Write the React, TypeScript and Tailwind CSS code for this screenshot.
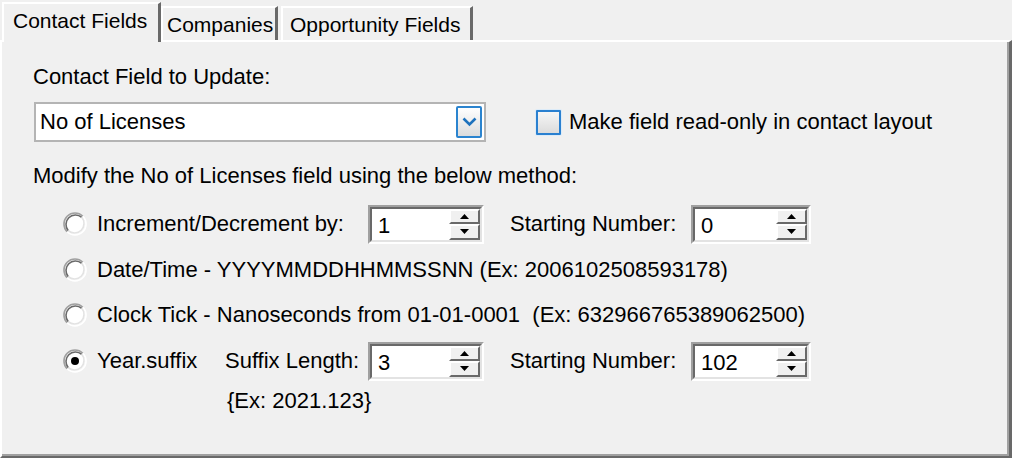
import React from 'react';

const Radio: React.FC<{ checked?: boolean }> = ({ checked }) => (
  <svg width="24" height="24" viewBox="0 0 24 24" className="shrink-0">
    <circle cx="12" cy="12" r="10" fill="#ffffff" />
    <path d="M4.2 19.8 A11 11 0 0 1 19.8 4.2" fill="none" stroke="#a0a0a0" strokeWidth="1.6" />
    <path d="M5.3 18.7 A9.5 9.5 0 0 1 18.7 5.3" fill="none" stroke="#696969" strokeWidth="1.6" />
    <path d="M19.8 4.2 A11 11 0 0 1 4.2 19.8" fill="none" stroke="#ffffff" strokeWidth="1.6" />
    <path d="M18.7 5.3 A9.5 9.5 0 0 1 5.3 18.7" fill="none" stroke="#e3e3e3" strokeWidth="1.6" />
    {checked && <circle cx="12" cy="12" r="4" fill="#000000" />}
  </svg>
);

const Arrow: React.FC<{ up?: boolean }> = ({ up }) => (
  <svg width="9" height="5" viewBox="0 0 9 5">
    {up ? <polygon points="0,5 9,5 4.5,0" fill="#000" /> : <polygon points="0,0 9,0 4.5,5" fill="#000" />}
  </svg>
);

const SpinBox: React.FC<{ value: string; width: string }> = ({ value, width }) => (
  <div className={`${width} h-[39px] shrink-0 border-t-2 border-l-2 border-[#a0a0a0] border-b-2 border-r-2 border-b-white border-r-white`}>
    <div className="h-full flex border-t-2 border-l-2 border-[#696969] border-b-2 border-r-2 border-b-[#e3e3e3] border-r-[#e3e3e3] bg-white">
      <div className="flex-1 flex items-center pl-[6px] pt-[3px]">{value}</div>
      <div className="w-[31px] flex flex-col">
        <div className="flex-1 flex items-center justify-center bg-[#f0f0f0] border-t-2 border-l-2 border-white border-b-2 border-r-2 border-b-[#696969] border-r-[#696969]">
          <Arrow up />
        </div>
        <div className="flex-1 flex items-center justify-center bg-[#f0f0f0] border-t-2 border-l-2 border-white border-b-2 border-r-2 border-b-[#696969] border-r-[#696969]">
          <Arrow />
        </div>
      </div>
    </div>
  </div>
);

export default function App() {
  return (
    <div className="w-[1012px] h-[458px] bg-[#f0f0f0] flex flex-col overflow-hidden text-black font-['Liberation_Sans',Arial,sans-serif]">
      {/* Tabs */}
      <div className="h-[42px] shrink-0 flex items-end relative z-10 text-[21px] leading-none">
        <div className="ml-[2px] h-[40px] w-[159px] bg-[#f0f0f0] border-t-2 border-l-2 border-white border-r-[3px] border-r-[#696969] flex pt-[6px] pl-[9px]">
          Contact Fields
        </div>
        <div className="mb-[2px] h-[34px] w-[117px] border-t-2 border-l-2 border-white border-r-[3px] border-r-[#696969] flex items-center pl-[4px]">
          Companies
        </div>
        <div className="ml-[3px] mb-[2px] h-[34px] w-[192px] border-t-2 border-l-2 border-white border-r-[3px] border-r-[#696969] flex items-center pl-[7px]">
          Opportunity Fields
        </div>
      </div>

      {/* Panel */}
      <div className="-mt-[2px] flex-1 border-t-2 border-l-2 border-white border-r-[3px] border-b-2 border-r-[#696969] border-b-[#696969] shadow-[inset_-2px_-2px_0_#a0a0a0] text-[22px] leading-[24px] pl-[31px]">
        <div className="mt-[23px]">Contact Field to Update:</div>

        <div className="mt-[13px] flex items-center">
          <div className="ml-[1px] w-[452px] h-[40px] border-2 border-[#b4b4b4] bg-white flex items-center justify-between pl-[4px] pr-[2px]">
            <span>No of Licenses</span>
            <div className="w-[26px] h-[32px] rounded-[2px] border-2 border-[#2b84cf] bg-gradient-to-b from-white to-[#dcdcdc] flex items-center justify-center">
              <svg width="15" height="10" viewBox="0 0 15 10">
                <polyline points="1.5,1.5 7.5,7.5 13.5,1.5" fill="none" stroke="#1e72bd" strokeWidth="2.6" />
              </svg>
            </div>
          </div>
          <div className="ml-[50px] w-[25px] h-[25px] rounded-[1px] border-2 border-[#2a80d0] bg-gradient-to-b from-[#f6f6f6] to-[#dcdcdc] shadow-[0_0_0_1px_#dcebf8]" />
          <span className="ml-[8px]">Make field read-only in contact layout</span>
        </div>

        <div className="mt-[22px]">Modify the No of Licenses field using the below method:</div>

        <div className="mt-[13px] flex flex-col">
          <div className="h-[46px] flex items-center">
            <div className="w-[335px] flex items-center pl-[30px]">
              <Radio />
              <span className="ml-[10px]">Increment/Decrement by:</span>
            </div>
            <SpinBox value="1" width="w-[116px]" />
            <span className="ml-[26px] w-[181px]">Starting Number:</span>
            <SpinBox value="0" width="w-[120px]" />
          </div>
          <div className="h-[45px] flex items-center pl-[30px]">
            <Radio />
            <span className="ml-[10px]">Date/Time - YYYYMMDDHHMMSSNN (Ex: 2006102508593178)</span>
          </div>
          <div className="h-[46px] flex items-center pl-[30px]">
            <Radio />
            <span className="ml-[10px]">Clock Tick - Nanoseconds from 01-01-0001&nbsp; (Ex: 632966765389062500)</span>
          </div>
          <div className="h-[46px] flex items-center">
            <div className="w-[335px] flex items-center pl-[30px]">
              <Radio checked />
              <span className="ml-[10px] w-[128px]">Year.suffix</span>
              <span>Suffix Length:</span>
            </div>
            <SpinBox value="3" width="w-[116px]" />
            <span className="ml-[26px] w-[181px]">Starting Number:</span>
            <SpinBox value="102" width="w-[120px]" />
          </div>
          <div className="mt-[5px] pl-[194px]">{'{Ex: 2021.123}'}</div>
        </div>
      </div>
    </div>
  );
}
